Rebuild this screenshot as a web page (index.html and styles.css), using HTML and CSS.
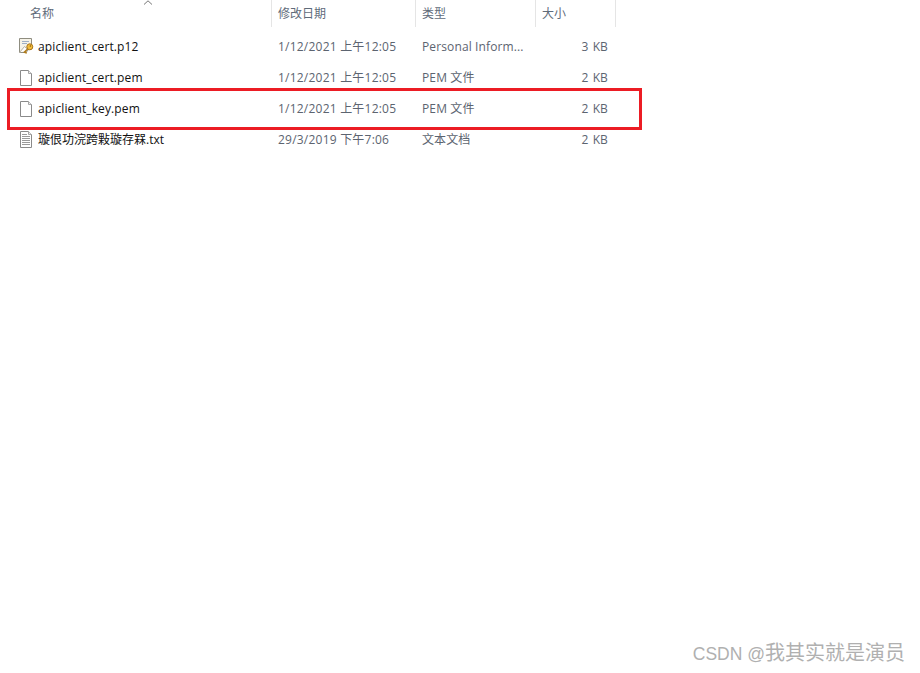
FILE: index.html
```html
<!DOCTYPE html>
<html lang="en">
<head>
    <meta charset="UTF-8">
    <title>File list</title>
    <link rel="stylesheet" href="styles.css">
</head>
<body>
    <div class="list">
        <svg class="sort-arrow" width="10" height="5" viewBox="0 0 10 5"><path d="M1 4.5 L5 0.8 L9 4.5" fill="none" stroke="#777"/></svg>
        <div class="row head">
            <div class="col name">名称</div>
            <div class="col date">修改日期</div>
            <div class="col type">类型</div>
            <div class="col size">大小</div>
        </div>
        <div class="row">
            <div class="col name">
                <svg class="icon" width="16" height="17" viewBox="0 0 16 17">
                    <path d="M.5 .5 H12.5 V8 L7 14.5 H.5 Z" fill="#f6f3e8" stroke="#8f8d80"/>
                    <path d="M.5 14.5 L5.5 8.5 L9 11.5" fill="#fff" stroke="#b3ae9e"/>
                    <path d="M3 3.5 H10 M3 5.5 H8" stroke="#9fb0c6"/>
                    <circle cx="10.8" cy="8.8" r="3" fill="#f2bd3c" stroke="#a8741a"/>
                    <circle cx="11.4" cy="8" r=".8" fill="#8a5c10"/>
                    <path d="M8.6 11 L4.8 14.8 M6 13.8 L7.6 15.4" stroke="#b07c1c" stroke-width="1.6"/>
                </svg>
                <span class="file">apiclient_cert.p12</span>
            </div>
            <div class="col date">1/12/2021 上午12:05</div>
            <div class="col type">Personal Inform...</div>
            <div class="col size">3 KB</div>
        </div>
        <div class="row">
            <div class="col name">
                <svg class="icon" width="16" height="17" viewBox="0 0 16 17">
                    <path d="M1.5 1.5 H9.5 L12.5 4.5 V16.5 H1.5 Z" fill="#fff" stroke="#8a8a8a"/>
                    <path d="M9.5 1.5 V4.5 H12.5" fill="#eee" stroke="#a5a5a5"/>
                </svg>
                <span class="file">apiclient_cert.pem</span>
            </div>
            <div class="col date">1/12/2021 上午12:05</div>
            <div class="col type">PEM 文件</div>
            <div class="col size">2 KB</div>
        </div>
        <div class="row">
            <div class="col name">
                <svg class="icon" width="16" height="17" viewBox="0 0 16 17">
                    <path d="M1.5 1.5 H9.5 L12.5 4.5 V16.5 H1.5 Z" fill="#fff" stroke="#8a8a8a"/>
                    <path d="M9.5 1.5 V4.5 H12.5" fill="#eee" stroke="#a5a5a5"/>
                </svg>
                <span class="file">apiclient_key.pem</span>
            </div>
            <div class="col date">1/12/2021 上午12:05</div>
            <div class="col type">PEM 文件</div>
            <div class="col size">2 KB</div>
        </div>
        <div class="row">
            <div class="col name">
                <svg class="icon" width="16" height="17" viewBox="0 0 16 17">
                    <path d="M1.5 .5 H9.5 L12.5 3.5 V16.5 H1.5 Z" fill="#fff" stroke="#8a8a8a"/>
                    <path d="M9.5 .5 V3.5 H12.5" fill="#eee" stroke="#a5a5a5"/>
                    <path d="M3 3.5 H8 M3 5.5 H11 M3 7.5 H11 M3 9.5 H11 M3 11.5 H11 M3 13.5 H11" stroke="#9a9a9a"/>
                </svg>
                <span class="file file-cjk">璇佷功浣跨敤璇存槑.txt</span>
            </div>
            <div class="col date">29/3/2019 下午7:06</div>
            <div class="col type">文本文档</div>
            <div class="col size">2 KB</div>
        </div>
    </div>
    <div class="highlight"></div>
    <div class="watermark"><span class="watermark-latin">CSDN @</span>我其实就是演员</div>
</body>
</html>
```

FILE: styles.css
```css
html, body {
    margin: 0;
    height: 673px;
    overflow: hidden;
    background-color: #fff;
}
body {
    position: relative;
    font-family: "Open Sans", "Noto Sans CJK SC", sans-serif;
    font-size: 12px;
    line-height: 16px;
}
.list {
    width: 616px;
}
.sort-arrow {
    position: absolute;
    left: 143px;
    top: 0;
}
.row {
    display: grid;
    grid-template-columns: 272px 144px 120px 80px;
    height: 31px;
    align-items: center;
    color: #5c6470;
    letter-spacing: .12px;
}
.head {
    height: 27px;
    margin-bottom: 4px;
    align-items: stretch;
    color: #5f6b7a;
    letter-spacing: 0;
}
.col {
    display: flex;
    align-items: center;
    padding-left: 6px;
}
.row .name {
    padding-left: 19px;
    gap: 3px;
}
.row:not(.head) .date {
    letter-spacing: .22px;
}
.head .col {
    border-right: 1px solid #e5e5e5;
}
.head .name {
    padding-left: 30px;
}
.row:not(.head) .size {
    justify-content: flex-end;
    padding-right: 8px;
    word-spacing: 1px;
}
.icon {
    flex: none;
}
.file {
    color: #111;
}
.file-cjk {
    letter-spacing: 0;
}
.highlight {
    position: absolute;
    left: 7px;
    top: 88px;
    width: 629px;
    height: 36px;
    border: 3px solid #ec1c24;
}
.watermark {
    position: absolute;
    right: 15px;
    bottom: 6px;
    font-family: "Liberation Sans", "Noto Sans CJK SC", sans-serif;
    font-size: 20px;
    line-height: 26px;
    color: #b0b0b0;
}
.watermark-latin {
    font-size: 17.5px;
}
```
